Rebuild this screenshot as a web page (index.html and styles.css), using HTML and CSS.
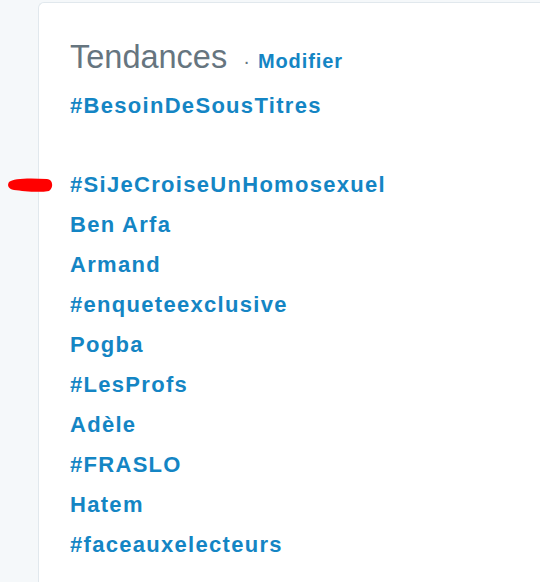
FILE: index.html
```html
<!DOCTYPE html>
<html lang="fr">
<head>
<meta charset="utf-8">
<title>Tendances</title>
<link rel="stylesheet" href="styles.css">
</head>
<body>
<div class="page">
  <section class="card">
    <h2 class="title"><span class="title-text">Tendances</span><span class="sep">·</span><a class="edit" href="#">Modifier</a></h2>
    <ul class="trends">
      <li><a href="#">#BesoinDeSousTitres</a></li>
      <li class="blank"></li>
      <li><a href="#">#SiJeCroiseUnHomosexuel</a></li>
      <li><a href="#">Ben Arfa</a></li>
      <li><a href="#">Armand</a></li>
      <li><a href="#">#enqueteexclusive</a></li>
      <li><a href="#">Pogba</a></li>
      <li><a href="#">#LesProfs</a></li>
      <li><a href="#">Adèle</a></li>
      <li><a href="#">#FRASLO</a></li>
      <li><a href="#">Hatem</a></li>
      <li><a href="#">#faceauxelecteurs</a></li>
    </ul>
  </section>
  <svg class="mark" width="50" height="24" viewBox="0 0 50 24" aria-hidden="true">
    <path d="M4,8 C8,4 26,4 42,5 C48,5 49,14 44,17 C33,19 18,17 9,16 C3,15 2,11 4,8 Z" fill="#ff0000"/>
  </svg>
</div>
</body>
</html>
```
FILE: styles.css
```css
html, body {
  margin: 0;
  padding: 0;
  background: #f5f8fa;
  overflow: hidden;
}

.page {
  position: relative;
  width: 540px;
  height: 582px;
  overflow: hidden;
}

.card {
  margin: 2px 0 0 38px;
  background: #ffffff;
  border: 1px solid #e1e8ed;
  border-right: none;
  border-bottom: none;
  border-radius: 6px 0 0 0;
  padding: 34px 0 0 31px;
  height: 600px;
  box-sizing: border-box;
}

.title {
  margin: 0;
  font-family: "Liberation Sans", Arial, sans-serif;
  font-weight: normal;
  font-size: 32.5px;
  line-height: 40px;
  height: 40px;
  color: #66757f;
  white-space: nowrap;
}

.sep {
  font-size: 20px;
  line-height: 1;
  margin: 0 8px 0 16px;
  color: #66757f;
}

.edit {
  font-size: 20px;
  line-height: 1;
  font-weight: bold;
  letter-spacing: 0.9px;
  color: #1485c4;
  text-decoration: none;
}

.trends {
  list-style: none;
  margin: 9px 0 0 0;
  padding: 0;
}

.trends li {
  height: 40px;
  font-family: "Liberation Sans", Arial, sans-serif;
  font-size: 22px;
  font-weight: bold;
  line-height: 40px;
  letter-spacing: 1.3px;
  white-space: nowrap;
}

.trends li.blank {
  height: 39px;
}

.trends a {
  color: #1485c4;
  text-decoration: none;
}

.mark {
  position: absolute;
  left: 5px;
  top: 174px;
}
```
